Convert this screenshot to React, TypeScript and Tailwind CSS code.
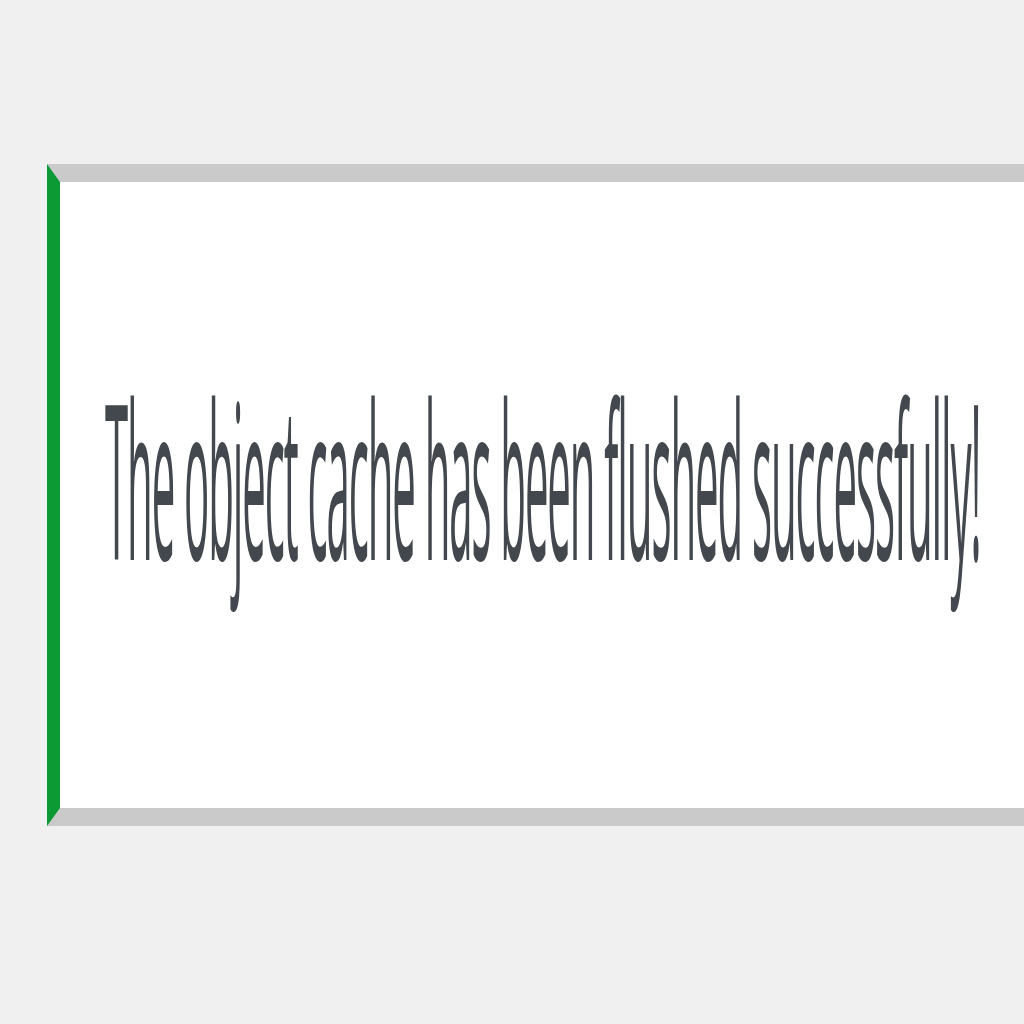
export default function App() {
  return (
    <div className="h-screen w-full overflow-hidden bg-[#f0f0f0] pt-[164px] pl-[47px]">
      <div className="flex h-[662px] w-[1100px] items-center border-y-[18px] border-l-[13px] border-y-[#cacaca] border-l-[#0c9a35] bg-white pb-[34px] pl-[45px]">
        <p
          className="inline-block origin-center scale-y-[5.15] whitespace-nowrap text-[42px] font-normal leading-none tracking-[-1.1px] text-[#43484e]"
          style={{ fontFamily: '"Open Sans", "Noto Sans", sans-serif' }}
        >
          The object cache has been flushed successfully!
        </p>
      </div>
    </div>
  );
}
